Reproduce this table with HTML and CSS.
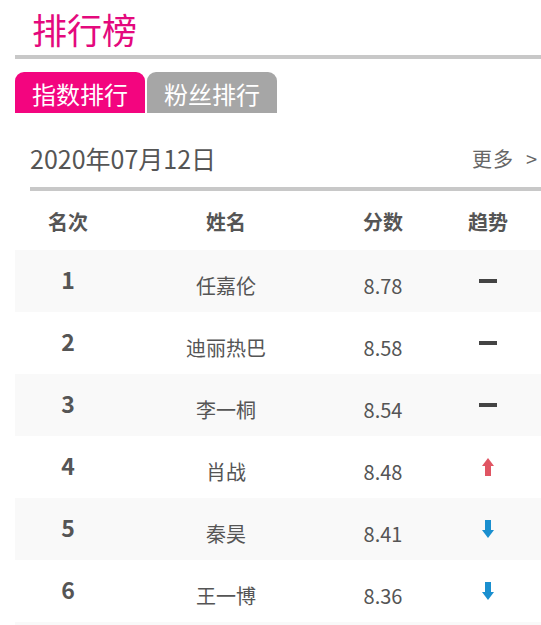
FILE: index.html
```html
<!DOCTYPE html>
<html lang="zh">
<head>
<meta charset="utf-8">
<link rel="stylesheet" href="styles.css">
</head>
<body>
<div class="page">
  <div class="title">排行榜</div>
  <div class="tabs">
    <div class="tab active">指数排行</div>
    <div class="tab">粉丝排行</div>
  </div>
  <div class="datebar">
    <span class="date">2020年07月12日</span>
    <span class="more">更多<span class="gt">&gt;</span></span>
  </div>
  <div class="table">
    <div class="row head"><span>名次</span><span>姓名</span><span>分数</span><span>趋势</span></div>
    <div class="row odd"><span class="rank">1</span><span>任嘉伦</span><span>8.78</span><span class="trend"><i class="flat"></i></span></div>
    <div class="row"><span class="rank">2</span><span>迪丽热巴</span><span>8.58</span><span class="trend"><i class="flat"></i></span></div>
    <div class="row odd"><span class="rank">3</span><span>李一桐</span><span>8.54</span><span class="trend"><i class="flat"></i></span></div>
    <div class="row"><span class="rank">4</span><span>肖战</span><span>8.48</span><span class="trend"><svg class="arrow" width="12" height="18" viewBox="0 0 12 18"><path d="M6 0 L12 8 L9 8 L9 18 L3 18 L3 8 L0 8 Z" fill="#e05563"/></svg></span></div>
    <div class="row odd"><span class="rank">5</span><span>秦昊</span><span>8.41</span><span class="trend"><svg class="arrow" width="12" height="18" viewBox="0 0 12 18"><path d="M3 0 L9 0 L9 10 L12 10 L6 18 L0 10 L3 10 Z" fill="#1a8fcf"/></svg></span></div>
    <div class="row"><span class="rank">6</span><span>王一博</span><span>8.36</span><span class="trend"><svg class="arrow" width="12" height="18" viewBox="0 0 12 18"><path d="M3 0 L9 0 L9 10 L12 10 L6 18 L0 10 L3 10 Z" fill="#1a8fcf"/></svg></span></div>
    <div class="tail"></div>
  </div>
</div>
</body>
</html>
```

FILE: styles.css
```css
html, body {
  margin: 0;
  padding: 0;
  background: #fff;
}
body {
  font-family: "Noto Sans CJK SC", "Open Sans", sans-serif;
  color: #555;
}
.page {
  padding-left: 15px;
}
.title {
  height: 55px;
  padding-left: 17px;
  font-size: 35px;
  line-height: 58px;
  color: #e4097d;
  border-bottom: 4px solid #c8c8c8;
  box-sizing: content-box;
}
.tabs {
  display: flex;
  gap: 2px;
  margin-top: 13px;
}
.tab {
  width: 130px;
  height: 41px;
  border-radius: 9px 9px 0 0;
  background: #a6a6a6;
  color: #fff;
  font-size: 24px;
  line-height: 43px;
  text-align: center;
}
.tab.active {
  background: #f3057f;
}
.datebar {
  margin-left: 15px;
  height: 74px;
  display: flex;
  justify-content: space-between;
  align-items: center;
  border-bottom: 4px solid #c8c8c8;
  padding-right: 3px;
}
.date {
  font-size: 25px;
  color: #555;
  padding-top: 16px;
}
.more {
  font-size: 20px;
  color: #666;
  padding-top: 16px;
  letter-spacing: 1px;
}
.gt {
  margin-left: 12px;
}
.row {
  display: grid;
  grid-template-columns: 106px 210px 104px 106px;
  height: 62px;
  align-items: center;
  text-align: center;
  font-size: 20px;
  color: #555;
}
.row span {
  padding-top: 8px;
}
.row.head {
  height: 59px;
  font-weight: bold;
  font-size: 20px;
}
.row.head span {
  padding-top: 2px;
}
.row.odd {
  background: #f9f9f9;
}
.tail {
  height: 3px;
  background: #f9f9f9;
}
.rank {
  font-weight: bold;
  font-size: 23px;
  position: relative;
  top: -6px;
}
.trend {
  display: flex;
  justify-content: center;
  align-items: center;
  height: 62px;
  padding-top: 0 !important;
}
.flat {
  display: block;
  width: 18px;
  height: 4px;
  background: #444;
}
.arrow {
  display: block;
}
```
